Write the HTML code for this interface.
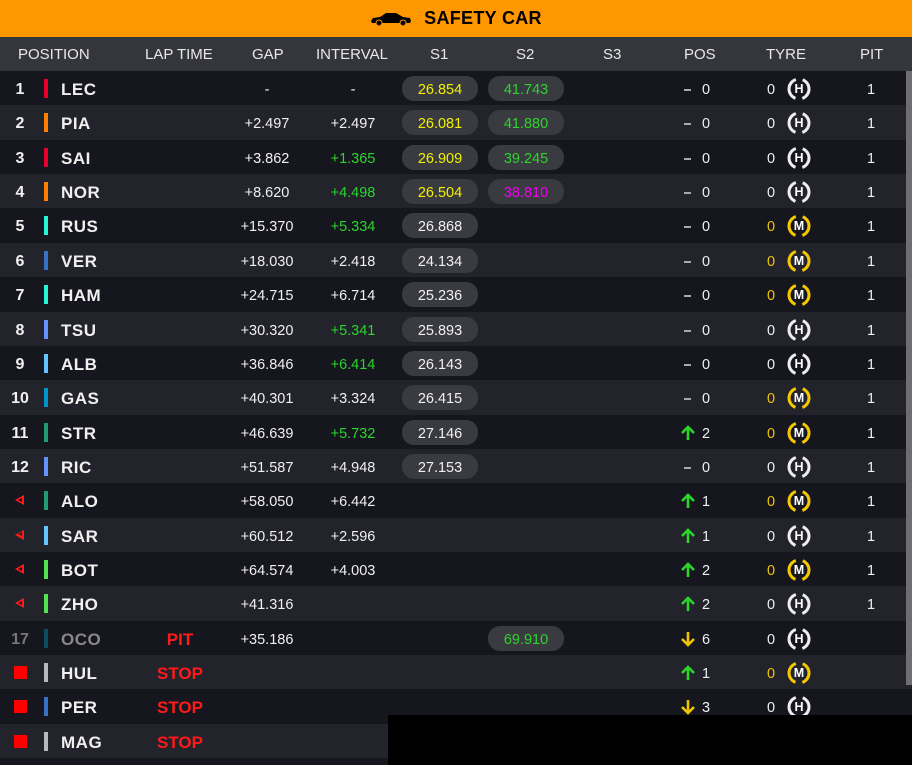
<!DOCTYPE html>
<html><head><meta charset="utf-8"><style>
*{margin:0;padding:0;box-sizing:border-box}
html,body{width:912px;height:765px;overflow:hidden}
body{background:#16171e;font-family:"Liberation Sans",sans-serif;color:#f0f0f0;position:relative}
.top{height:37px;background:#ff9800;display:flex;align-items:center;justify-content:center;gap:12px;font-weight:bold;font-size:18px;color:#000;letter-spacing:.3px}
.hdr{height:34px;background:#35363c;position:relative;font-size:15px;color:#e8e8e8}
.hdr span{position:absolute;top:9px;text-align:center}
.row{height:34.37px;position:relative;font-size:14.5px}
.row:nth-child(odd){background:#16171e}
.row:nth-child(even){background:#22232b}
.c{position:absolute;top:2px;line-height:34px;text-align:center}
.n{left:4px;width:32px;font-weight:bold;font-size:16px}
.bar{position:absolute;left:44px;top:8px;width:4px;height:19px}
.code{left:61px;font-weight:bold;font-size:17px;letter-spacing:.5px}
.lap{left:130px;width:100px;font-weight:bold;font-size:17px;color:#ff1a1a}
.gap{left:227px;width:80px}
.int{left:313px;width:80px}
.pill{position:absolute;top:5px;width:76px;height:25px;border-radius:12px;background:#3a3b41;text-align:center;line-height:28px;font-size:14.5px}
.s1{left:402px}.s2{left:488px}
.y{color:#f0f000}.g{color:#2cd42c}.p{color:#f000f0}.gy{color:#f2c400}
.dash{position:absolute;left:684px;top:18px;width:7px;height:2px;background:#aaa}
.pn{left:700px;width:12px}
.tz{left:764px;width:14px}
.ty{position:absolute;left:786px;top:5px;width:26px;height:26px}
.ty span{position:absolute;left:0;top:0;width:26px;line-height:27px;text-align:center;font-size:12.5px;font-weight:bold;color:#fff}
.pit{left:850px;width:42px}
.tri{position:absolute;left:15px;top:12px;width:0;height:0;border-top:5px solid transparent;border-bottom:5px solid transparent;border-right:9px solid #ff1a1a}
.tri:after{content:"";position:absolute;left:3px;top:-2.5px;border-top:2.5px solid transparent;border-bottom:2.5px solid transparent;border-right:4.5px solid #16171e}
.row:nth-child(even) .tri:after{border-right-color:#22232b}
.sq{position:absolute;left:14px;top:11px;width:13px;height:13px;background:#ff0000}
.arr{position:absolute;left:680px;top:10px}
</style></head><body>
<div class="top"><svg width="42" height="14" viewBox="0 0 42 14"><path d="M1 9 L3 6 L10 5 L16 1 L26 1 L33 5 L40 6 L41 9 L40 11 L2 11 Z" fill="#000"/><circle cx="9" cy="11" r="3" fill="#000" stroke="#ff9800" stroke-width="1"/><circle cx="33" cy="11" r="3" fill="#000" stroke="#ff9800" stroke-width="1"/></svg><span>SAFETY CAR</span></div>
<div class="hdr"><span style="left:18px">POSITION</span><span style="left:145px">LAP TIME</span><span style="left:252px">GAP</span><span style="left:316px">INTERVAL</span><span style="left:430px">S1</span><span style="left:516px">S2</span><span style="left:603px">S3</span><span style="left:684px">POS</span><span style="left:766px">TYRE</span><span style="left:860px">PIT</span></div>
<svg width="0" height="0" style="position:absolute"><defs><symbol id="up" viewBox="0 0 16 16"><path d="M8 15V2M2 8L8 2L14 8" fill="none" stroke="#2cd42c" stroke-width="2.6"/></symbol><symbol id="dn" viewBox="0 0 16 16"><path d="M8 1V14M2 8L8 14L14 8" fill="none" stroke="#f2c400" stroke-width="2.6"/></symbol>
<symbol id="th" viewBox="0 0 26 26"><circle cx="13" cy="13" r="10" fill="none" stroke="#eee" stroke-width="3" stroke-dasharray="24.4 7" stroke-dashoffset="12.2"/></symbol>
<symbol id="tm" viewBox="0 0 26 26"><circle cx="13" cy="13" r="10" fill="none" stroke="#f5c800" stroke-width="3" stroke-dasharray="24.4 7" stroke-dashoffset="12.2"/></symbol></defs></svg>
<div id="rows">
<div class="row"><div class="c n">1</div><div class="bar" style="background:#e8002d"></div><div class="c code">LEC</div><div class="c gap">-</div><div class="c int">-</div><div class="pill s1 y">26.854</div><div class="pill s2 g">41.743</div><div class="dash"></div><div class="c pn">0</div><div class="c tz">0</div><div class="ty"><svg width="26" height="26"><use href="#th"/></svg><span>H</span></div><div class="c pit">1</div></div>
<div class="row"><div class="c n">2</div><div class="bar" style="background:#ff8000"></div><div class="c code">PIA</div><div class="c gap">+2.497</div><div class="c int">+2.497</div><div class="pill s1 y">26.081</div><div class="pill s2 g">41.880</div><div class="dash"></div><div class="c pn">0</div><div class="c tz">0</div><div class="ty"><svg width="26" height="26"><use href="#th"/></svg><span>H</span></div><div class="c pit">1</div></div>
<div class="row"><div class="c n">3</div><div class="bar" style="background:#e8002d"></div><div class="c code">SAI</div><div class="c gap">+3.862</div><div class="c int g">+1.365</div><div class="pill s1 y">26.909</div><div class="pill s2 g">39.245</div><div class="dash"></div><div class="c pn">0</div><div class="c tz">0</div><div class="ty"><svg width="26" height="26"><use href="#th"/></svg><span>H</span></div><div class="c pit">1</div></div>
<div class="row"><div class="c n">4</div><div class="bar" style="background:#ff8000"></div><div class="c code">NOR</div><div class="c gap">+8.620</div><div class="c int g">+4.498</div><div class="pill s1 y">26.504</div><div class="pill s2 p">38.810</div><div class="dash"></div><div class="c pn">0</div><div class="c tz">0</div><div class="ty"><svg width="26" height="26"><use href="#th"/></svg><span>H</span></div><div class="c pit">1</div></div>
<div class="row"><div class="c n">5</div><div class="bar" style="background:#27f4d2"></div><div class="c code">RUS</div><div class="c gap">+15.370</div><div class="c int g">+5.334</div><div class="pill s1">26.868</div><div class="dash"></div><div class="c pn">0</div><div class="c tz gy">0</div><div class="ty"><svg width="26" height="26"><use href="#tm"/></svg><span>M</span></div><div class="c pit">1</div></div>
<div class="row"><div class="c n">6</div><div class="bar" style="background:#3671c6"></div><div class="c code">VER</div><div class="c gap">+18.030</div><div class="c int">+2.418</div><div class="pill s1">24.134</div><div class="dash"></div><div class="c pn">0</div><div class="c tz gy">0</div><div class="ty"><svg width="26" height="26"><use href="#tm"/></svg><span>M</span></div><div class="c pit">1</div></div>
<div class="row"><div class="c n">7</div><div class="bar" style="background:#27f4d2"></div><div class="c code">HAM</div><div class="c gap">+24.715</div><div class="c int">+6.714</div><div class="pill s1">25.236</div><div class="dash"></div><div class="c pn">0</div><div class="c tz gy">0</div><div class="ty"><svg width="26" height="26"><use href="#tm"/></svg><span>M</span></div><div class="c pit">1</div></div>
<div class="row"><div class="c n">8</div><div class="bar" style="background:#6692ff"></div><div class="c code">TSU</div><div class="c gap">+30.320</div><div class="c int g">+5.341</div><div class="pill s1">25.893</div><div class="dash"></div><div class="c pn">0</div><div class="c tz">0</div><div class="ty"><svg width="26" height="26"><use href="#th"/></svg><span>H</span></div><div class="c pit">1</div></div>
<div class="row"><div class="c n">9</div><div class="bar" style="background:#64c4ff"></div><div class="c code">ALB</div><div class="c gap">+36.846</div><div class="c int g">+6.414</div><div class="pill s1">26.143</div><div class="dash"></div><div class="c pn">0</div><div class="c tz">0</div><div class="ty"><svg width="26" height="26"><use href="#th"/></svg><span>H</span></div><div class="c pit">1</div></div>
<div class="row"><div class="c n">10</div><div class="bar" style="background:#0093cc"></div><div class="c code">GAS</div><div class="c gap">+40.301</div><div class="c int">+3.324</div><div class="pill s1">26.415</div><div class="dash"></div><div class="c pn">0</div><div class="c tz gy">0</div><div class="ty"><svg width="26" height="26"><use href="#tm"/></svg><span>M</span></div><div class="c pit">1</div></div>
<div class="row"><div class="c n">11</div><div class="bar" style="background:#229971"></div><div class="c code">STR</div><div class="c gap">+46.639</div><div class="c int g">+5.732</div><div class="pill s1">27.146</div><svg class="arr" width="16" height="16"><use href="#up"/></svg><div class="c pn">2</div><div class="c tz gy">0</div><div class="ty"><svg width="26" height="26"><use href="#tm"/></svg><span>M</span></div><div class="c pit">1</div></div>
<div class="row"><div class="c n">12</div><div class="bar" style="background:#6692ff"></div><div class="c code">RIC</div><div class="c gap">+51.587</div><div class="c int">+4.948</div><div class="pill s1">27.153</div><div class="dash"></div><div class="c pn">0</div><div class="c tz">0</div><div class="ty"><svg width="26" height="26"><use href="#th"/></svg><span>H</span></div><div class="c pit">1</div></div>
<div class="row"><div class="tri"></div><div class="bar" style="background:#229971"></div><div class="c code">ALO</div><div class="c gap">+58.050</div><div class="c int">+6.442</div><svg class="arr" width="16" height="16"><use href="#up"/></svg><div class="c pn">1</div><div class="c tz gy">0</div><div class="ty"><svg width="26" height="26"><use href="#tm"/></svg><span>M</span></div><div class="c pit">1</div></div>
<div class="row"><div class="tri"></div><div class="bar" style="background:#64c4ff"></div><div class="c code">SAR</div><div class="c gap">+60.512</div><div class="c int">+2.596</div><svg class="arr" width="16" height="16"><use href="#up"/></svg><div class="c pn">1</div><div class="c tz">0</div><div class="ty"><svg width="26" height="26"><use href="#th"/></svg><span>H</span></div><div class="c pit">1</div></div>
<div class="row"><div class="tri"></div><div class="bar" style="background:#52e252"></div><div class="c code">BOT</div><div class="c gap">+64.574</div><div class="c int">+4.003</div><svg class="arr" width="16" height="16"><use href="#up"/></svg><div class="c pn">2</div><div class="c tz gy">0</div><div class="ty"><svg width="26" height="26"><use href="#tm"/></svg><span>M</span></div><div class="c pit">1</div></div>
<div class="row"><div class="tri"></div><div class="bar" style="background:#52e252"></div><div class="c code">ZHO</div><div class="c gap">+41.316</div><svg class="arr" width="16" height="16"><use href="#up"/></svg><div class="c pn">2</div><div class="c tz">0</div><div class="ty"><svg width="26" height="26"><use href="#th"/></svg><span>H</span></div><div class="c pit">1</div></div>
<div class="row"><div class="c n" style="color:#777">17</div><div class="bar" style="background:#0b4f5f"></div><div class="c code" style="color:#888">OCO</div><div class="c lap">PIT</div><div class="c gap">+35.186</div><div class="pill s2 g">69.910</div><svg class="arr" width="16" height="16"><use href="#dn"/></svg><div class="c pn">6</div><div class="c tz">0</div><div class="ty"><svg width="26" height="26"><use href="#th"/></svg><span>H</span></div></div>
<div class="row"><div class="sq"></div><div class="bar" style="background:#b6babd"></div><div class="c code">HUL</div><div class="c lap">STOP</div><svg class="arr" width="16" height="16"><use href="#up"/></svg><div class="c pn">1</div><div class="c tz gy">0</div><div class="ty"><svg width="26" height="26"><use href="#tm"/></svg><span>M</span></div></div>
<div class="row"><div class="sq"></div><div class="bar" style="background:#3671c6"></div><div class="c code">PER</div><div class="c lap">STOP</div><svg class="arr" width="16" height="16"><use href="#dn"/></svg><div class="c pn">3</div><div class="c tz">0</div><div class="ty"><svg width="26" height="26"><use href="#th"/></svg><span>H</span></div></div>
<div class="row"><div class="sq"></div><div class="bar" style="background:#b6babd"></div><div class="c code">MAG</div><div class="c lap">STOP</div></div>
</div>
<div style="position:absolute;left:906px;top:71px;width:6px;height:614px;background:#6e6e72"></div>
<div style="position:absolute;left:388px;top:715px;width:524px;height:50px;background:#000"></div>
</body></html>
